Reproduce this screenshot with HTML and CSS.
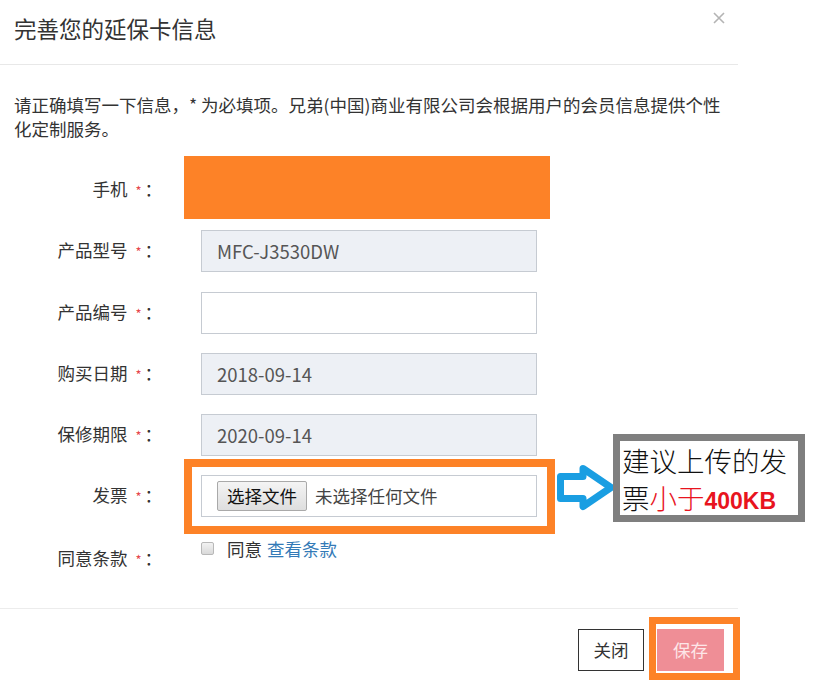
FILE: index.html
```html
<!DOCTYPE html>
<html lang="zh-CN">
<head>
<meta charset="utf-8">
<title>完善您的延保卡信息</title>
<link rel="stylesheet" href="styles.css">
</head>
<body>
<div class="page">
  <div class="modal">
    <div class="modal-header">
      <h4 class="modal-title">完善您的延保卡信息</h4>
      <span class="close" aria-label="关闭">
        <svg width="12" height="12" viewBox="0 0 12 12"><path d="M1 1 L11 11 M11 1 L1 11" stroke="#b4b4b4" stroke-width="1.6" fill="none"/></svg>
      </span>
    </div>
    <div class="modal-body">
      <p class="intro">请正确填写一下信息，* 为必填项。兄弟(中国)商业有限公司会根据用户的会员信息提供个性化定制服务。</p>
      <div class="form">
        <div class="row">
          <label class="label">手机<span class="req">*</span>：</label>
          <div class="input">13800000000</div>
        </div>
        <div class="row">
          <label class="label">产品型号<span class="req">*</span>：</label>
          <div class="input readonly">MFC-J3530DW</div>
        </div>
        <div class="row">
          <label class="label">产品编号<span class="req">*</span>：</label>
          <div class="input"></div>
        </div>
        <div class="row">
          <label class="label">购买日期<span class="req">*</span>：</label>
          <div class="input readonly">2018-09-14</div>
        </div>
        <div class="row">
          <label class="label">保修期限<span class="req">*</span>：</label>
          <div class="input readonly">2020-09-14</div>
        </div>
        <div class="row">
          <label class="label">发票<span class="req">*</span>：</label>
          <div class="input file">
            <span class="file-btn">选择文件</span><span class="file-name">未选择任何文件</span>
          </div>
        </div>
        <div class="row agree-row">
          <label class="label">同意条款<span class="req">*</span>：</label>
          <div class="agree">
            <span class="checkbox"></span><span class="agree-text">同意</span><a class="link" href="#">查看条款</a>
          </div>
        </div>
      </div>
    </div>
    <div class="modal-footer">
      <button class="btn btn-close">关闭</button>
      <button class="btn btn-save">保存</button>
    </div>
  </div>

  <div class="mark mark-phone"></div>
  <div class="mark mark-invoice"></div>
  <div class="mark mark-save"></div>
  <svg class="arrow" width="62" height="50" viewBox="0 0 62 50">
    <path d="M5.5 13.5 H28 V5.5 L56 24.5 L28 43.5 V35.5 H5.5 Z" fill="#fff" stroke="#1a9ee2" stroke-width="7" stroke-linejoin="round"/>
  </svg>
  <div class="callout">
    <div class="callout-line">建议上传的发</div>
    <div class="callout-line">票<span class="red">小于</span><span class="red bold">400KB</span></div>
  </div>
</div>
</body>
</html>
```

FILE: styles.css
```css
* { box-sizing: border-box; }
html, body { margin: 0; padding: 0; background: #fff; }
body {
  font-family: "Noto Sans CJK SC", "Noto Sans", sans-serif;
  color: #333;
  width: 817px;
  height: 682px;
  overflow: hidden;
}
.page { position: relative; width: 817px; height: 682px; }
.modal { position: relative; width: 738px; }
.modal-header {
  height: 65px;
  padding: 12px 14px 0;
  border-bottom: 1px solid #e8e8e8;
}
.modal-title {
  margin: 0;
  font-size: 22.5px;
  font-weight: normal;
  line-height: 32px;
  color: #333;
}
.close { position: absolute; left: 713px; top: 12px; width: 12px; height: 12px; line-height: 0; }
.modal-body { padding: 28px 14px 29px; }
.intro { margin: 0; font-size: 17.5px; line-height: 24px; color: #333; }
.form { margin-top: 28px; display: flex; flex-direction: column; gap: 19.25px; }
.row { display: flex; align-items: center; height: 42px; }
.label {
  width: 148px;
  text-align: right;
  font-size: 17.5px;
  line-height: 42px;
  color: #333;
  flex: none;
}
.req { color: #e6474c; font-size: 13px; margin: 0 3px 0 8px; }
.input {
  margin-left: 39px;
  width: 336px;
  height: 42px;
  border: 1px solid #c6cbd2;
  background: #fff;
  padding: 0 15px;
  font-size: 18.5px;
  line-height: 40px;
  color: #555;
}
.input.readonly { background: #edf0f5; }
.input.file { display: flex; align-items: center; padding-left: 15px; }
.file-btn {
  display: inline-block;
  height: 30px;
  line-height: 28px;
  padding: 0 9px;
  border: 1px solid #a9a9a9;
  border-radius: 2px;
  background: linear-gradient(#f4f4f4, #dedede);
  color: #111;
  font-size: 17.5px;
}
.file-name { margin-left: 8px; font-size: 17.5px; color: #444; }
.agree-row { align-items: flex-start; }
.agree {
  margin-left: 39px;
  display: flex;
  align-items: center;
  height: 24px;
  font-size: 17.5px;
  line-height: 24px;
}
.checkbox {
  display: inline-block;
  width: 13px;
  height: 13px;
  border: 1px solid #b8b8b8;
  border-radius: 2px;
  background: linear-gradient(#f2f2f2, #d9d9d9);
}
.agree-text { margin-left: 13px; color: #333; }
.link { margin-left: 5px; color: #337ab7; text-decoration: none; }
.modal-footer {
  border-top: 1px solid #ececec;
  padding: 20px 14px 0 0;
  display: flex;
  justify-content: flex-end;
  gap: 13px;
}
.btn {
  height: 42px;
  font-family: "Noto Sans CJK SC", sans-serif;
  font-size: 17.5px;
  padding: 0;
  cursor: pointer;
}
.btn-close { width: 66px; background: #fff; border: 1px solid #333; color: #333; }
.btn-save { width: 67px; background: #ef8e96; border: none; color: #fde6e8; }

.mark { position: absolute; }
.mark-phone { left: 184px; top: 156px; width: 366px; height: 63px; background: #fd8227; }
.mark-invoice { left: 184px; top: 459px; width: 371px; height: 75px; border: 8px solid #fd8227; }
.mark-save { left: 649px; top: 617px; width: 91px; height: 63px; border: 7px solid #fd8227; }
.arrow { position: absolute; left: 555px; top: 463px; }
.callout {
  position: absolute;
  left: 613px;
  top: 434px;
  width: 192px;
  height: 88px;
  border: 7px solid #7f7f7f;
  background: #fff;
  padding: 1px 0 0 2px;
}
.callout-line {
  font-family: "Noto Sans CJK SC", serif;
  font-weight: 300;
  font-size: 27.5px;
  line-height: 37px;
  color: #111;
  white-space: nowrap;
}
.red { color: #e8141e; }
.bold { font-family: "Liberation Sans", Arial, sans-serif; font-weight: bold; font-size: 23px; }
```
